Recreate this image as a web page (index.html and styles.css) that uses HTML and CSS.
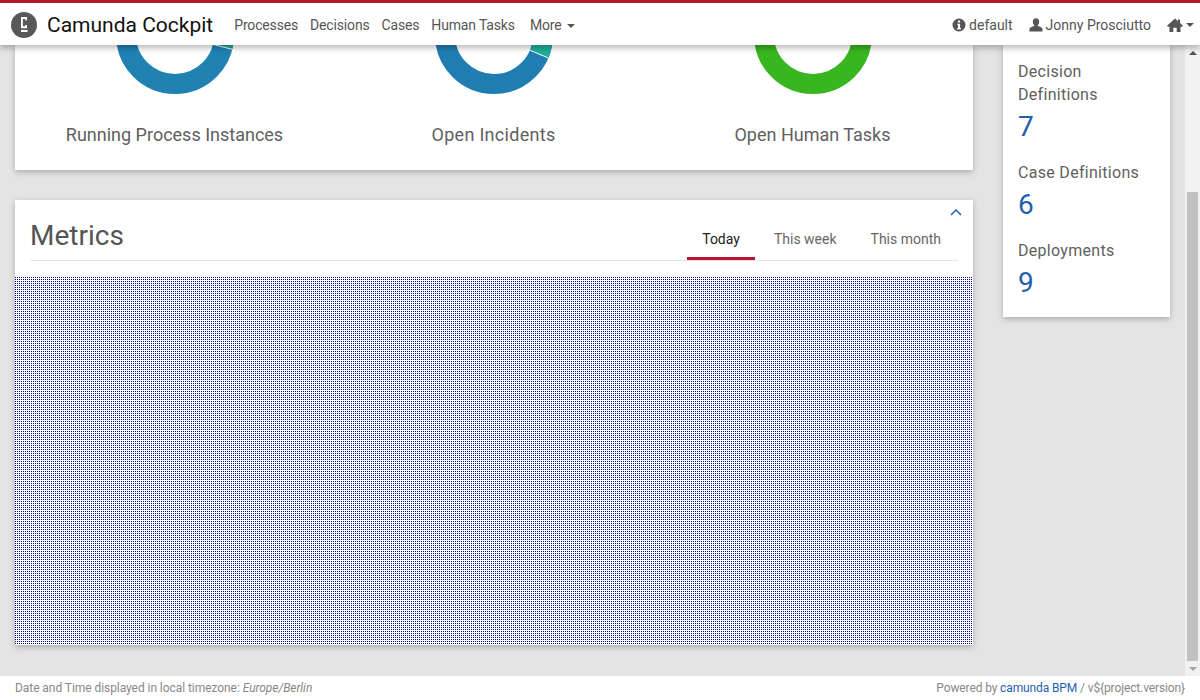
FILE: index.html
```html
<!DOCTYPE html>
<html lang="en">
<head>
<meta charset="utf-8">
<title>Camunda Cockpit</title>
<link rel="stylesheet" href="styles.css">
</head>
<body>
<header class="navbar">
  <a class="brand">
    <svg class="logo" viewBox="0 0 26 26" width="26" height="26" aria-hidden="true"><circle cx="13" cy="13" r="13" fill="#58585a"/><path d="M10 5h6v3.200h-1.800V6.900h-2.300v7.400h2.300v-1.200H16V16.200h-6z" fill="#fff"/><rect x="10" y="18" width="6.500" height="2" fill="#fff"/></svg>
    <span class="brand-name">Camunda Cockpit</span>
  </a>
  <nav class="nav-main">
    <a>Processes</a><a>Decisions</a><a>Cases</a><a>Human Tasks</a><a class="more">More <i class="caret"></i></a>
  </nav>
  <nav class="nav-right">
    <a><svg class="ico" viewBox="0 0 14 14" width="14" height="14"><path fill="#555" fill-rule="evenodd" d="M7 .5a6.500 6.500 0 1 0 0 13 6.500 6.500 0 0 0 0-13zM5.900 2.600h2.200v1.900H5.900zM5.200 5.700h2.900v4.300h.8v1.400H5.200V10H6V7.100h-.8z"/></svg> default</a>
    <a><svg class="ico" viewBox="0 0 14 14" width="14" height="14"><path fill="#555" d="M7 .2c2 0 3.200 1.500 3.200 3.500 0 1.400-.5 2.700-1.400 3.400v1c1.900.7 4.700 1.400 4.700 3.200v2.200H.5v-2.200c0-1.800 2.800-2.500 4.700-3.200v-1C4.300 6.400 3.800 5.100 3.800 3.700 3.800 1.700 5 .2 7 .2z"/></svg> Jonny Prosciutto</a>
    <a class="home"><svg class="ico" viewBox="0 0 16 14" width="16" height="14"><path fill="#555" d="M8 .5l3 2.700V1.500h2v3.500l3 2.700-.9 1H13.500V14H9.700V9.700H6.300V14H2.500V8.700H.9l-.9-1z"/></svg><i class="caret"></i></a>
  </nav>
</header>
<div class="scroller">
  <main class="content">
    <div class="left">
      <section class="card donuts">
        <div class="donut-col">
          <svg class="donut" viewBox="0 0 118 118" width="118" height="118"><circle cx="59" cy="59" r="49" fill="none" stroke="#1f82b3" stroke-width="20"/><path d="M96.800 68.400L116.200 73.300A59 59 0 0 0 114.400 38.800L95.600 45.700A39 39 0 0 1 96.800 68.400z" fill="#25a58f"/><path d="M96.800 68.400L116.200 73.300" stroke="#fff" stroke-width="1"/></svg>
          <div class="donut-label">Running Process Instances</div>
        </div>
        <div class="donut-col">
          <svg class="donut" viewBox="0 0 118 118" width="118" height="118"><circle cx="59" cy="59" r="49" fill="none" stroke="#1f7db2" stroke-width="20"/><path d="M94.900 74.200L113.300 82A59 59 0 0 0 114.400 38.800L95.600 45.700A39 39 0 0 1 94.900 74.200z" fill="#22ad9b"/><path d="M94.900 74.200L113.300 82" stroke="#fff" stroke-width="1"/></svg>
          <div class="donut-label">Open Incidents</div>
        </div>
        <div class="donut-col">
          <svg class="donut" viewBox="0 0 118 118" width="118" height="118"><circle cx="59" cy="59" r="49" fill="none" stroke="#38b51f" stroke-width="20"/></svg>
          <div class="donut-label">Open Human Tasks</div>
        </div>
      </section>
      <section class="card metrics">
        <a class="collapse"><svg viewBox="0 0 12 8" width="12" height="8"><path d="M1 7l5-5 5 5" fill="none" stroke="#1f5fae" stroke-width="1.500"/></svg></a>
        <div class="metrics-head">
          <h2>Metrics</h2>
          <ul class="tabs">
            <li class="active">Today</li>
            <li>This week</li>
            <li>This month</li>
          </ul>
        </div>
        <div class="chart"></div>
      </section>
    </div>
    <aside class="card side">
      <div class="stat"><div class="stat-label">Decision Definitions</div><a class="stat-value">7</a></div>
      <div class="stat"><div class="stat-label">Case Definitions</div><a class="stat-value">6</a></div>
      <div class="stat"><div class="stat-label">Deployments</div><a class="stat-value">9</a></div>
    </aside>
  </main>
  <div class="scrollbar">
    <div class="arrow up"></div>
    <div class="track"><div class="thumb"></div></div>
    <div class="arrow down"></div>
  </div>
</div>
<footer class="footer">
  <span class="foot-left">Date and Time displayed in local timezone: <em>Europe/Berlin</em></span>
  <span class="foot-right">Powered by <a>camunda BPM</a> / v${project.version}</span>
</footer>
</body>
</html>
```
FILE: styles.css
```css
* { box-sizing: border-box; }
html, body { margin: 0; height: 700px; overflow: hidden; }
body {
  font-family: Roboto, "Liberation Sans", sans-serif;
  color: #555;
  background: #fff;
  display: flex;
  flex-direction: column;
}
.navbar {
  height: 45px;
  flex: none;
  border-top: 3px solid #b5152b;
  background: #fff;
  display: flex;
  align-items: center;
  padding: 2px 6px 0 11px;
  box-shadow: 0 3px 6px rgba(0,0,0,.28);
  position: relative;
  z-index: 2;
  font-size: 14px;
}
.brand { display: flex; align-items: center; gap: 10px; color: #111; }
.logo { display: block; }
.brand-name { font-size: 21px; color: #111; }
.nav-main { display: flex; gap: 12px; margin-left: 21px; letter-spacing: -.16px; }
.nav-main .more { margin-left: 3px; }
.more .caret { margin-left: 2px; }
.nav-right { margin-left: auto; display: flex; gap: 16px; align-items: center; }
.nav-right a { display: flex; align-items: center; gap: 3px; }
.caret {
  display: inline-block;
  width: 0; height: 0;
  border-left: 4px solid transparent;
  border-right: 4px solid transparent;
  border-top: 4px solid #555;
  vertical-align: middle;
}
.scroller { flex: 1; display: flex; min-height: 0; background: #e4e4e4; overflow: hidden; }
.content {
  flex: 1;
  display: flex;
  gap: 30px;
  padding: 0 15px;
  align-items: flex-start;
}
.left { width: 958px; display: flex; flex-direction: column; gap: 30px; flex: none; }
.card { background: #fff; box-shadow: 0 2px 6px rgba(0,0,0,.25); }
.donuts { display: flex; height: 125px; overflow: hidden; }
.donut-col { width: 319px; text-align: center; }
.donut { display: block; margin: -69px auto 0; }
.donut-label { font-size: 18px; margin-top: 29px; line-height: 24px; color: #5f5f5f; }
.donut-col:nth-child(2) .donut-label { letter-spacing: .3px; }
.metrics { position: relative; }
.collapse { position: absolute; top: 8px; right: 11px; line-height: 0; }
.metrics-head {
  margin: 0 15px;
  height: 61px;
  display: flex;
  justify-content: space-between;
  align-items: flex-end;
  border-bottom: 1px solid #e4e4e4;
  padding-right: 2px;
}
.metrics-head h2 { margin: 0 0 5px; font-size: 28px; font-weight: 400; line-height: 38px; color: #555; }
.tabs { list-style: none; margin: 0; padding: 0; display: flex; font-size: 14px; }
.tabs li { padding: 2px 15px 0; line-height: 20px; height: 33px; border-bottom: 3px solid transparent; margin-left: 4px; color: #666; }
.tabs li.active { border-bottom-color: #b5152b; color: #222; }
.chart {
  margin-top: 16px;
  height: 368px;
  background-color: #000090;
  background-image:
    linear-gradient(to right, transparent 1px, #fff 1px),
    linear-gradient(to bottom, transparent 1px, #fff 1px);
  background-size: 2px 2px;
}
.side { width: 167px; flex: none; height: 272px; padding: 15px 15px 0; }
.stat { font-size: 16px; }
.stat-label { line-height: 23px; color: #5f5f5f; letter-spacing: .3px; }
.stat-value { display: block; font-size: 28px; line-height: 42px; color: #1f5fae; margin-bottom: 13px; }
.scrollbar { width: 15px; flex: none; background: #f1f1f1; display: flex; flex-direction: column; }
.arrow { height: 15px; flex: none; display: flex; align-items: center; justify-content: center; }
.arrow.up::before { content: ""; border: 4px solid transparent; border-bottom: 4px solid #505050; border-top: 0; }
.arrow.down::before { content: ""; border: 4px solid transparent; border-top: 4px solid #a3a3a3; border-bottom: 0; }
.track { flex: 1; display: flex; flex-direction: column; justify-content: flex-end; }
.thumb { height: 469px; margin: 0 2px; background: #c1c1c1; }
.footer {
  height: 24px;
  flex: none;
  padding: 0 15px;
  display: flex;
  justify-content: space-between;
  align-items: center;
  font-size: 12px;
  color: #888;
  background: #fff;
}
.foot-left { letter-spacing: -.06px; }
.foot-right { letter-spacing: -.12px; }
.footer a { color: #1f5fae; }
```
